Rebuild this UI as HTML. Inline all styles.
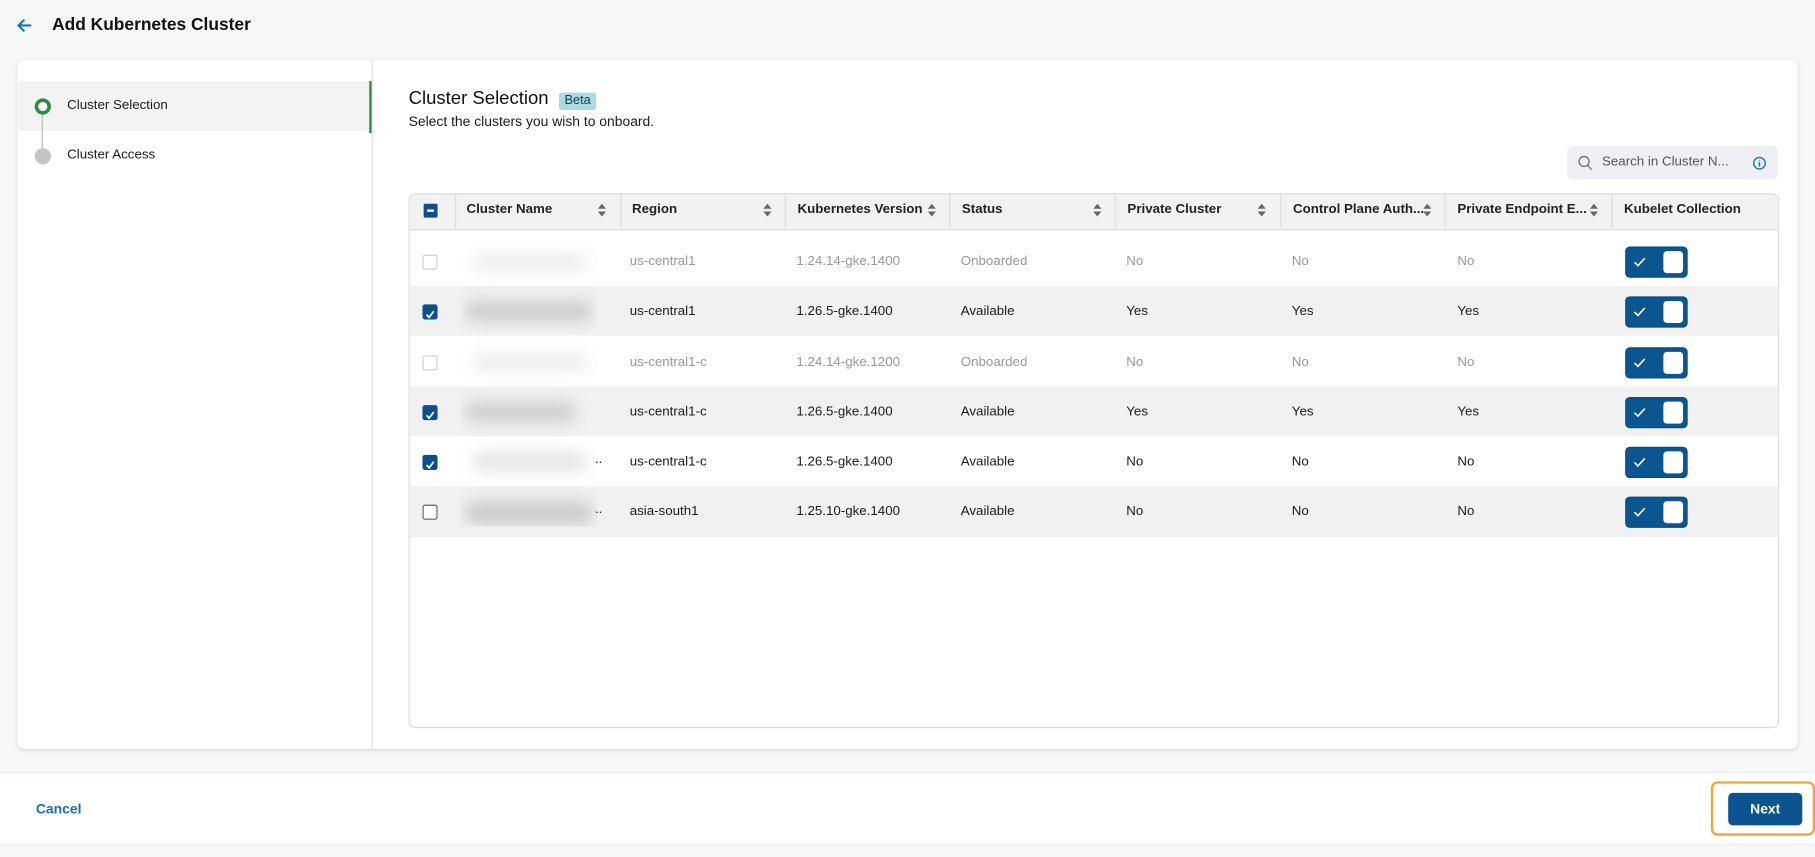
<!DOCTYPE html>
<html><head><meta charset="utf-8"><style>
html,body{margin:0;padding:0;width:1815px;height:856px;overflow:hidden;background:#f6f7f9;font-family:"Liberation Sans",Arial,sans-serif;}
#w{position:absolute;left:0;top:0;width:1568px;height:740px;transform:scale(1.15753);transform-origin:0 0;}
.a{position:absolute;}
.t{font-size:11.5px;color:#1b1b1b;white-space:nowrap;}
.g{color:#9a9a9a;}
.hd{font-size:11.5px;font-weight:bold;color:#222;white-space:nowrap;}
.cb{position:absolute;width:11px;height:11px;border:1px solid #888;border-radius:2px;background:#fff;}
.cb.d{border-color:#d0d0d0;}
.cb.c{background:#0d4f8b;border-color:#0d4f8b;}
.sort{position:absolute;width:8px;height:11px;}
.tg{position:absolute;left:1405px;width:52px;height:25px;background:#0b5591;border-radius:3px;box-shadow:0 0 0 1px #0a4a80;}
.tg .k{position:absolute;right:3px;top:3px;width:17px;height:19px;background:#fff;border-radius:3px;}
.blur{position:absolute;background:#d8d8d8;filter:blur(6px);border-radius:8px;}
</style></head><body><div id="w">
<svg class="a" style="left:13px;top:15px" width="16" height="14" viewBox="0 0 16 14"><path d="M14 7H3M8 2L3 7l5 5" fill="none" stroke="#1f6fc0" stroke-width="1.8"/></svg>
<div class="a" style="left:45px;top:13px;font-size:15px;font-weight:bold;color:#111;">Add Kubernetes Cluster</div>

<div class="a" style="left:15px;top:52px;width:1538px;height:595px;background:#fff;border-radius:6px;box-shadow:0 1px 3px rgba(0,0,0,.12);"></div>
<div class="a" style="left:321px;top:52px;width:1px;height:595px;background:#e3e3e3;"></div>
<div class="a" style="left:16px;top:70px;width:303px;height:43px;background:#f3f3f3;"></div>
<div class="a" style="left:319px;top:70px;width:2px;height:45px;background:#2a8a3a;"></div>
<div class="a" style="left:36px;top:98px;width:1px;height:32px;background:#bbb;"></div>
<div class="a" style="left:30px;top:85px;width:8px;height:8px;border:3px solid #2c8c3c;border-radius:50%;background:#fff;"></div>
<div class="a" style="left:30px;top:128px;width:14px;height:14px;border-radius:50%;background:#c4c4c4;"></div>
<div class="a t" style="left:58px;top:85px;">Cluster Selection</div>
<div class="a t" style="left:58px;top:128px;">Cluster Access</div>

<div class="a" style="left:353px;top:77px;font-size:16px;color:#111;">Cluster Selection</div>
<div class="a" style="left:483px;top:80px;width:32px;height:15px;background:#a9dbe3;border-radius:2px;font-size:11px;line-height:15px;text-align:center;color:#1d3b4a;">Beta</div>
<div class="a t" style="left:353px;top:98px;font-size:12px;">Select the clusters you wish to onboard.</div>

<div class="a" style="left:1354px;top:126px;width:182px;height:29px;background:#eef0f3;border-radius:5px;"></div>
<svg class="a" style="left:1363px;top:134px" width="13" height="14" viewBox="0 0 13 14"><circle cx="5.5" cy="5.5" r="4.3" fill="none" stroke="#777" stroke-width="1.2"/><path d="M8.6 8.8L12 12.6" stroke="#777" stroke-width="1.2"/></svg>
<div class="a t" style="left:1384px;top:134px;color:#555;">Search in Cluster N...</div>
<svg class="a" style="left:1514px;top:135px" width="12" height="12" viewBox="0 0 12 12"><circle cx="6" cy="6" r="5" fill="none" stroke="#1f6fc0" stroke-width="1.2"/><path d="M6 5v4M6 3v.8" stroke="#1f6fc0" stroke-width="1.3"/></svg>

<div class="a" style="left:353px;top:167px;width:1182px;height:460px;border:1px solid #dcdcdc;border-radius:6px;background:#fff;overflow:hidden;">
 <div class="a" style="left:0;top:0;width:1182px;height:30px;background:#f2f2f2;border-bottom:1px solid #dcdcdc;"></div>
 <div class="a" style="left:0;top:79px;width:1182px;height:43px;background:#f1f1f1;"></div>
 <div class="a" style="left:0;top:166px;width:1182px;height:43px;background:#f1f1f1;"></div>
 <div class="a" style="left:0;top:252px;width:1182px;height:44px;background:#f1f1f1;"></div>
</div>
<div class="a" style="left:393px;top:168px;width:1px;height:29px;background:#dcdcdc"></div>
<div class="a" style="left:536px;top:168px;width:1px;height:29px;background:#dcdcdc"></div>
<div class="a" style="left:678px;top:168px;width:1px;height:29px;background:#dcdcdc"></div>
<div class="a" style="left:820px;top:168px;width:1px;height:29px;background:#dcdcdc"></div>
<div class="a" style="left:963px;top:168px;width:1px;height:29px;background:#dcdcdc"></div>
<div class="a" style="left:1106px;top:168px;width:1px;height:29px;background:#dcdcdc"></div>
<div class="a" style="left:1248px;top:168px;width:1px;height:29px;background:#dcdcdc"></div>
<div class="a" style="left:1392px;top:168px;width:1px;height:29px;background:#dcdcdc"></div>

<div class="a" style="left:366px;top:176px;width:12px;height:12px;background:#0d4f8b;border-radius:1px;"><div style="position:absolute;left:3px;top:5px;width:6px;height:2px;background:#fff"></div></div>
<div class="a hd" style="left:403px;top:175px;">Cluster Name</div>
<div class="a hd" style="left:546px;top:175px;">Region</div>
<div class="a hd" style="left:689px;top:175px;">Kubernetes Version</div>
<div class="a hd" style="left:831px;top:175px;">Status</div>
<div class="a hd" style="left:974px;top:175px;">Private Cluster</div>
<div class="a hd" style="left:1117px;top:175px;">Control Plane Auth...</div>
<div class="a hd" style="left:1259px;top:175px;">Private Endpoint E...</div>
<div class="a hd" style="left:1403px;top:175px;">Kubelet Collection</div>
<svg width="0" height="0" style="position:absolute"><defs><g id="s"><path d="M4 0L7.5 4.3H.5z M4 11L7.5 6.7H.5z" fill="#666"/></g></defs></svg>
<svg class="sort" style="left:516px;top:176px"><use href="#s"/></svg>
<svg class="sort" style="left:659px;top:176px"><use href="#s"/></svg>
<svg class="sort" style="left:801px;top:176px"><use href="#s"/></svg>
<svg class="sort" style="left:944px;top:176px"><use href="#s"/></svg>
<svg class="sort" style="left:1086px;top:176px"><use href="#s"/></svg>
<svg class="sort" style="left:1229px;top:176px"><use href="#s"/></svg>
<svg class="sort" style="left:1373px;top:176px"><use href="#s"/></svg>

<div class="a" style="left:398px;top:212px;width:118px;height:243px;overflow:hidden;">
 <div class="blur" style="left:10px;top:6px;width:100px;height:18px;background:#f0f0f0"></div>
 <div class="blur" style="left:4px;top:48px;width:110px;height:18px;background:#cfcfcf"></div>
 <div class="blur" style="left:10px;top:92px;width:100px;height:18px;background:#f0f0f0"></div>
 <div class="blur" style="left:4px;top:135px;width:96px;height:18px;background:#d0d0d0"></div>
 <div class="blur" style="left:10px;top:178px;width:100px;height:18px;background:#e8e8e8"></div>
 <div class="blur" style="left:4px;top:221px;width:110px;height:20px;background:#cdcdcd"></div>
</div>
<div class="a t" style="left:514px;top:391px;">..</div>
<div class="a t" style="left:514px;top:434px;">..</div>

<div class="cb d" style="left:365px;top:220px"></div>
<div class="cb c" style="left:365px;top:263px"><svg width="11" height="11"><path d="M2.5 5.8l2.2 2.4L8.8 2.8" fill="none" stroke="#fff" stroke-width="1.5"/></svg></div>
<div class="cb d" style="left:365px;top:307px"></div>
<div class="cb c" style="left:365px;top:350px"><svg width="11" height="11"><path d="M2.5 5.8l2.2 2.4L8.8 2.8" fill="none" stroke="#fff" stroke-width="1.5"/></svg></div>
<div class="cb c" style="left:365px;top:393px"><svg width="11" height="11"><path d="M2.5 5.8l2.2 2.4L8.8 2.8" fill="none" stroke="#fff" stroke-width="1.5"/></svg></div>
<div class="cb" style="left:365px;top:436px;border-color:#666"></div>

<div class="a t g" style="left:544px;top:220px">us-central1</div><div class="a t g" style="left:688px;top:220px">1.24.14-gke.1400</div><div class="a t g" style="left:830px;top:220px">Onboarded</div><div class="a t g" style="left:973px;top:220px">No</div><div class="a t g" style="left:1116px;top:220px">No</div><div class="a t g" style="left:1259px;top:220px">No</div>
<div class="a t" style="left:544px;top:263px">us-central1</div><div class="a t" style="left:688px;top:263px">1.26.5-gke.1400</div><div class="a t" style="left:830px;top:263px">Available</div><div class="a t" style="left:973px;top:263px">Yes</div><div class="a t" style="left:1116px;top:263px">Yes</div><div class="a t" style="left:1259px;top:263px">Yes</div>
<div class="a t g" style="left:544px;top:307px">us-central1-c</div><div class="a t g" style="left:688px;top:307px">1.24.14-gke.1200</div><div class="a t g" style="left:830px;top:307px">Onboarded</div><div class="a t g" style="left:973px;top:307px">No</div><div class="a t g" style="left:1116px;top:307px">No</div><div class="a t g" style="left:1259px;top:307px">No</div>
<div class="a t" style="left:544px;top:350px">us-central1-c</div><div class="a t" style="left:688px;top:350px">1.26.5-gke.1400</div><div class="a t" style="left:830px;top:350px">Available</div><div class="a t" style="left:973px;top:350px">Yes</div><div class="a t" style="left:1116px;top:350px">Yes</div><div class="a t" style="left:1259px;top:350px">Yes</div>
<div class="a t" style="left:544px;top:393px">us-central1-c</div><div class="a t" style="left:688px;top:393px">1.26.5-gke.1400</div><div class="a t" style="left:830px;top:393px">Available</div><div class="a t" style="left:973px;top:393px">No</div><div class="a t" style="left:1116px;top:393px">No</div><div class="a t" style="left:1259px;top:393px">No</div>
<div class="a t" style="left:544px;top:436px">asia-south1</div><div class="a t" style="left:688px;top:436px">1.25.10-gke.1400</div><div class="a t" style="left:830px;top:436px">Available</div><div class="a t" style="left:973px;top:436px">No</div><div class="a t" style="left:1116px;top:436px">No</div><div class="a t" style="left:1259px;top:436px">No</div>

<div class="tg" style="top:214px"><svg class="a" style="left:6px;top:8px" width="11" height="9"><path d="M1 4.5l3 3L10 1" fill="none" stroke="#fff" stroke-width="1.4"/></svg><div class="k"></div></div>
<div class="tg" style="top:257px"><svg class="a" style="left:6px;top:8px" width="11" height="9"><path d="M1 4.5l3 3L10 1" fill="none" stroke="#fff" stroke-width="1.4"/></svg><div class="k"></div></div>
<div class="tg" style="top:301px"><svg class="a" style="left:6px;top:8px" width="11" height="9"><path d="M1 4.5l3 3L10 1" fill="none" stroke="#fff" stroke-width="1.4"/></svg><div class="k"></div></div>
<div class="tg" style="top:344px"><svg class="a" style="left:6px;top:8px" width="11" height="9"><path d="M1 4.5l3 3L10 1" fill="none" stroke="#fff" stroke-width="1.4"/></svg><div class="k"></div></div>
<div class="tg" style="top:387px"><svg class="a" style="left:6px;top:8px" width="11" height="9"><path d="M1 4.5l3 3L10 1" fill="none" stroke="#fff" stroke-width="1.4"/></svg><div class="k"></div></div>
<div class="tg" style="top:430px"><svg class="a" style="left:6px;top:8px" width="11" height="9"><path d="M1 4.5l3 3L10 1" fill="none" stroke="#fff" stroke-width="1.4"/></svg><div class="k"></div></div>

<div class="a" style="left:0;top:668px;width:1568px;height:61px;background:#fff;box-shadow:0 0 2px rgba(0,0,0,.1);"></div>
<div class="a" style="left:31px;top:692px;font-size:12px;font-weight:bold;color:#1a6fba;">Cancel</div>
<div class="a" style="left:1478px;top:675px;width:86px;height:43px;border:2px solid #f7a23b;border-radius:6px;"></div>
<div class="a" style="left:1493px;top:685px;width:64px;height:28px;background:#0b5490;border-radius:4px;color:#fff;font-size:12px;font-weight:bold;line-height:28px;text-align:center;">Next</div>
</div></body></html>
